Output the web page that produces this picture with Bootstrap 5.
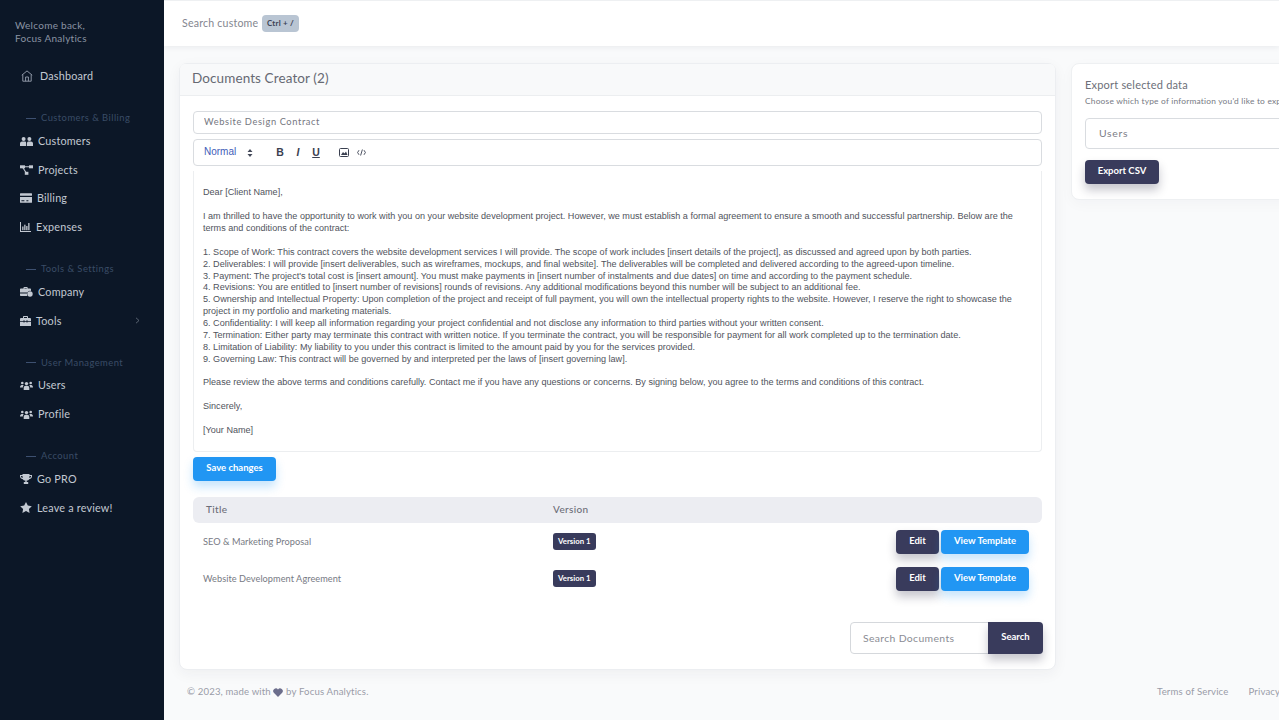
<!DOCTYPE html>
<html lang="en"><head><meta charset="utf-8"><title>Documents Creator</title>
<link href="https://cdn.jsdelivr.net/npm/bootstrap@5.3.0/dist/css/bootstrap.min.css" rel="stylesheet">
<style>
html,body{height:720px;overflow:hidden}
body{font-family:Lato,"Noto Sans",sans-serif;background:#f9fafb;color:#6c6f7d;font-size:11px;letter-spacing:.2px}
.shell{width:1279px;height:720px;overflow:hidden}
.side{width:164px;flex:none;background:#0c1727;height:720px;padding-top:19px}
.welcome{padding-left:15px;font-size:10px;line-height:13px;color:#8a93a3;margin-bottom:16.3px;letter-spacing:.27px}
.side .nav-link{display:flex;align-items:center;height:28.7px;padding:0 0 0 20px;color:#c3c9d2;font-size:10.8px;letter-spacing:.2px}
.side .nav-link svg{flex:none;margin-right:5px}
.side .nav-link.dash{padding-left:21px;margin-bottom:18.4px}
.side .nav-link.dash svg{margin-right:7px}
.sect{display:flex;align-items:center;height:20px;margin:0 0 -1.65px 26px;font-size:9.4px;letter-spacing:.45px;color:#3a4c66}
.sect::before{content:"";width:10px;height:1px;background:#3d5070;margin-right:5px}
.gapper{height:17.8px}
.side .nav-link .chev{margin-left:auto;margin-right:24px}
.mainwrap{min-width:0;flex:1;overflow:hidden}
.topbar{height:46px;background:#fff;border-top:1px solid #eef0f2;box-shadow:0 1px 6px rgba(30,40,60,.08);padding-left:18px}
.topbar input{width:76px;border:0;outline:0;background:none;padding:0;font-size:10.6px;letter-spacing:.2px;color:#70737f}
.topbar input::placeholder{color:#84868f}
.kbadge{background:#b9c5d3;color:#3b4254;font-size:8px;font-weight:700;padding:4px 5px;border-radius:4px;line-height:9px;letter-spacing:.2px}
.content{padding:17px 0 0 15px;gap:15px;width:1300px}
.maincard{width:877px;height:607px;flex:none;border:1px solid #eceef1;border-radius:8px;box-shadow:0 4px 14px rgba(30,40,60,.05);background:#fff}
.maincard .card-header{height:32px;padding:0 12px;background:#f8f9fa;border-bottom:1px solid #eceef0;font-size:13.5px;line-height:28px;letter-spacing:.1px;color:#666973}
.maincard .card-body{padding:15px 13px 0 13px}
.fld{height:23px;border:1px solid #d9dce0;border-radius:4px;padding:0 10px 2px;font-size:9.3px;letter-spacing:.6px;color:#75777f;box-shadow:none}
.tools{height:27px;border:1px solid #d9dce0;border-radius:4px;margin-top:5px;padding-left:10px;font-family:"Liberation Sans",sans-serif;color:#333a4c}
.tnorm{font-size:10px;color:#3f5cb8;width:43px;margin-top:-2px;letter-spacing:0}
.tbtn{width:18px;text-align:center;font-size:10.5px;color:#3a4050;font-weight:700;letter-spacing:0}
.tsort{margin-right:18px}
.timg{margin:0 8px 0 14px}
.editor{height:281px;margin-top:5px;border:1px solid #eceef0;border-top:0;border-radius:0 0 4px 4px;padding:16.4px 9px 0;font-family:"Liberation Sans",sans-serif;font-size:9.08px;line-height:11.87px;letter-spacing:0;color:#50535c}
.editor p{margin:0}
.btn-blue,.btn-navy{font-size:9.5px;letter-spacing:0;font-weight:700;color:#fff;border:0;border-radius:4px;padding:0 0 1px;height:24px}
.btn-blue{background:#2196f3;box-shadow:0 6px 10px rgba(33,150,243,.25)}
.btn-navy{background:#393b5c;box-shadow:0 6px 10px rgba(30,30,60,.25)}
.savebtn{width:83px;margin-top:5px}
.doc-table{margin:16px 0 0;--bs-table-bg:transparent;width:849px;table-layout:fixed}
.doc-table th{height:26px;padding:0 0 1px 13px;background:#ecedf2;border:0;font-weight:500;font-size:10px;letter-spacing:.35px;color:#6c6e78;vertical-align:middle}
.doc-table th:first-child{border-radius:6px 0 0 6px}.doc-table th:last-child{border-radius:0 6px 6px 0}
.doc-table th:nth-child(2){padding-left:0}
.doc-table td{height:37px;padding:0 0 0 10px;border:0;vertical-align:middle;font-size:9.2px;color:#777a84;letter-spacing:.05px}
.doc-table td:nth-child(2){padding-left:0}
.doc-table td:last-child{text-align:right;padding:0 13px 0 0;white-space:nowrap}
.vbadge{background:#393b5c;color:#fff;font-size:7.8px;font-weight:700;padding:4px 5px;line-height:9px;border-radius:3px;letter-spacing:0}
.tedit{width:43px;height:24px}.tview{width:88px;height:24px;margin-left:2px}
.searchgrp{width:193px;margin:25px -1px 0 auto}
.input-group.searchgrp>input.form-control{height:32px;width:139px;flex:none;border:1px solid #d5d8dc;border-radius:4px 0 0 4px;padding:0 12px;font-size:10.4px;letter-spacing:.35px}
.searchgrp input::placeholder{color:#8a8c94}
.input-group.searchgrp>.btn-navy{height:32px;width:55px;border-radius:0 4px 4px 0}
.sidecard{width:320px;height:137px;flex:none;border:1px solid #eef0f2;border-radius:8px;background:#fff;padding:14px 13px;overflow:hidden;box-shadow:0 4px 14px rgba(30,40,60,.03)}
.sidecard h6{font-size:11px;margin:0 0 3px;font-weight:400;letter-spacing:.2px;color:#6c6f79;line-height:14px}
.sidecard p{font-size:8.4px;margin:0 0 11px;letter-spacing:.2px;color:#777a84;line-height:12px;white-space:nowrap}
.sidecard .seldiv{height:31px;border:1px solid #d9dce0;border-radius:4px;padding:0 13px;font-size:10.4px;letter-spacing:.7px;line-height:29px;color:#7b7d86}
.csvbtn{width:74px;margin-top:11px}
.foot{padding:15px 0 0 23px;width:1300px;font-size:9.6px;letter-spacing:.15px;color:#9a9ca8}
.foot a{color:#9a9ca8;text-decoration:none}
.foot .links{margin-left:auto;width:307px;gap:20px}
</style></head><body>
<div class="shell d-flex">
<aside class="side">
 <div class="welcome">Welcome back,<br>Focus Analytics</div>
 <nav class="nav flex-column">
  <a class="nav-link dash" href="#"><svg width="12" height="12" viewBox="0 0 12 12" fill="none" stroke="#9aa3b1" stroke-width=".9"><path d="M.8 5.2 6 .9l5.2 4.3M1.800 4.600v6.600h8.400V4.600M4.600 11.200V7h2.800v4.200"/></svg>Dashboard</a>
  <div class="sect">Customers &amp; Billing</div>
  <a class="nav-link" href="#"><svg width="13" height="9" viewBox="0 0 13 9" fill="#c3c9d2"><circle cx="3.600" cy="2" r="2"/><circle cx="9.400" cy="2" r="2"/><path d="M0 9V6.600C0 5.300 1 4.600 2 4.600h3.200C6 4.600 6.200 5.300 6.200 6.600V9zM7 9V6.600c0-1.300.4-2 1.200-2H11c1 0 2 .7 2 2V9z"/></svg>Customers</a>
  <a class="nav-link" href="#"><svg width="13" height="10" viewBox="0 0 13 10" fill="#c3c9d2"><rect width="5" height="3" y=".3"/><rect x="9" width="4" height="3" y=".3"/><rect x="4.800" y="6.800" width="3.600" height="3"/><path d="M4 1.200h6v1H4zM2.500 3h1.200l2.600 4H5z"/></svg>Projects</a>
  <a class="nav-link" href="#"><svg width="12" height="10" viewBox="0 0 12 10" fill="#c3c9d2"><rect y=".3" width="12" height="2.400" rx=".5"/><path d="M0 4h12v5.200a.6.6 0 0 1-.6.6H.6a.6.6 0 0 1-.6-.6zm1.400 3.200v1h3v-1zm5 0v1h2v-1z" fill-rule="evenodd"/></svg>Billing</a>
  <a class="nav-link" href="#"><svg width="11" height="10" viewBox="0 0 11 10" fill="#c3c9d2"><path d="M0 0h1v9h10v1H0z"/><rect x="2.200" y="4.500" width="1.300" height="3.700"/><rect x="4.200" y="2.700" width="1.300" height="5.500"/><rect x="6.200" y="4" width="1.300" height="4.200"/><rect x="8.200" y="1" width="1.300" height="7.200"/></svg>Expenses</a>
  <div class="gapper"></div>
  <div class="sect">Tools &amp; Settings</div>
  <a class="nav-link" href="#"><svg width="13" height="10" viewBox="0 0 13 10" fill="#c3c9d2"><path d="M3.500 1.600V.8c0-.4.3-.8.8-.8h2.600c.5 0 .8.4.8.8v.8H10c.6 0 1 .4 1 1V4a3.200 3.200 0 0 0-3.700 1.600H0V2.600c0-.6.4-1 1-1zM4.500 1.600h2.200V1H4.500zM0 6.400h7V9H1c-.6 0-1-.4-1-1z"/><circle cx="10" cy="7" r="2.700"/></svg>Company</a>
  <a class="nav-link" href="#"><svg width="11" height="10" viewBox="0 0 11 10" fill="#c3c9d2"><path d="M3 2V1c0-.6.4-1 1-1h3c.6 0 1 .4 1 1v1h1.800c.7 0 1.200.5 1.200 1.200V5H7.500v-.7h-1V5h-2v-.7h-1V5H0V3.200C0 2.500.5 2 1.200 2zm1 0h3V1H4zM0 5.800h3.500v.7h1v-.7h2v.7h1v-.7H11V10H0z" fill-rule="evenodd"/></svg>Tools<svg class="chev" width="5" height="7" viewBox="0 0 5 7" fill="none" stroke="#6d7684" stroke-width=".8"><path d="m1 .8 3 2.700-3 2.700"/></svg></a>
  <div class="gapper"></div>
  <div class="sect">User Management</div>
  <a class="nav-link" href="#"><svg width="13" height="9" viewBox="0 0 13 9" fill="#c3c9d2"><circle cx="6.500" cy="2.600" r="1.700"/><circle cx="2.300" cy="2" r="1.300"/><circle cx="10.700" cy="2" r="1.300"/><path d="M3.700 9V7c0-1.300.9-2.200 2-2.200h1.600c1.100 0 2 .9 2 2.200v2zM0 6.500C0 5 .8 4 1.800 4h1.400l.4.600C3 5.200 2.800 5.800 2.800 6.500zM13 6.500C13 5 12.200 4 11.200 4H9.800l-.4.600c.6.600.8 1.200.8 1.900z"/></svg>Users</a>
  <a class="nav-link" href="#"><svg width="13" height="9" viewBox="0 0 13 9" fill="#c3c9d2"><circle cx="6.500" cy="2.600" r="1.700"/><circle cx="2.300" cy="2" r="1.300"/><circle cx="10.700" cy="2" r="1.300"/><path d="M3.700 9V7c0-1.300.9-2.200 2-2.200h1.600c1.100 0 2 .9 2 2.200v2zM0 6.500C0 5 .8 4 1.800 4h1.400l.4.600C3 5.200 2.800 5.800 2.800 6.500zM13 6.500C13 5 12.200 4 11.200 4H9.800l-.4.600c.6.600.8 1.200.8 1.900z"/></svg>Profile</a>
  <div class="gapper"></div>
  <div class="sect">Account</div>
  <a class="nav-link" href="#"><svg width="12" height="10" viewBox="0 0 12 10" fill="#c3c9d2"><path d="M2.500 0h7v1H12v1.300C12 3.800 10.900 5 9.200 5.200 8.700 6 8 6.400 6.700 6.600V8h1.500v2H3.800V8h1.500V6.600C4 6.400 3.300 6 2.800 5.200 1.100 5 0 3.800 0 2.300V1h2.500zM1 2v.3c0 .8.500 1.500 1.600 1.800L2.500 2zm10 0H9.500l-.1 2.100C10.500 3.800 11 3.100 11 2.300z" fill-rule="evenodd"/></svg>Go PRO</a>
  <a class="nav-link" href="#"><svg width="12" height="11" viewBox="0 0 12 11" fill="#c3c9d2"><path d="m6 0 1.800 3.600 4 .6L8.900 7l.7 4L6 9.100 2.400 11l.7-4L.2 4.200l4-.6z"/></svg>Leave a review!</a>
 </nav>
</aside>
<div class="mainwrap">
 <div class="topbar d-flex align-items-center gap-1">
  <input type="text" placeholder="Search customer" aria-label="Search"><span class="kbadge">Ctrl + /</span>
 </div>
 <div class="content d-flex align-items-start">
  <div class="card maincard">
   <div class="card-header">Documents Creator (2)</div>
   <div class="card-body">
    <input class="form-control fld" value="Website Design Contract" aria-label="Title">
    <div class="tools d-flex align-items-center">
     <span class="tnorm">Normal</span>
     <svg width="6" height="8" viewBox="0 0 6 8" fill="#444a5a" class="tsort"><path d="M3 0l2.500 3H.5zM3 8 .5 5h5z"/></svg>
     <span class="tbtn">B</span><span class="tbtn fst-italic">I</span><span class="tbtn text-decoration-underline">U</span>
     <svg width="10" height="9" viewBox="0 0 10 9" class="timg"><rect x=".5" y=".5" width="9" height="8" rx="1" fill="none" stroke="#3a4050"/><path d="M2 7l2-3 1.500 1.500L7 3.500 8.500 7z" fill="#3a4050"/></svg>
     <svg width="9" height="7" viewBox="0 0 9 7" fill="none" stroke="#3a4050" stroke-width=".9"><path d="M2 1.200 .6 3.500 2 5.800M7 1.200l1.400 2.300L7 5.800M5.400.5 3.600 6.500"/></svg>
    </div>
    <div class="editor">
<p>Dear [Client Name],</p><p>&nbsp;</p>
<p>I am thrilled to have the opportunity to work with you on your website development project. However, we must establish a formal agreement to ensure a smooth and successful partnership. Below are the terms and conditions of the contract:</p><p>&nbsp;</p>
<p>1. Scope of Work: This contract covers the website development services I will provide. The scope of work includes [insert details of the project], as discussed and agreed upon by both parties.</p>
<p>2. Deliverables: I will provide [insert deliverables, such as wireframes, mockups, and final website]. The deliverables will be completed and delivered according to the agreed-upon timeline.</p>
<p>3. Payment: The project's total cost is [insert amount]. You must make payments in [insert number of instalments and due dates] on time and according to the payment schedule.</p>
<p>4. Revisions: You are entitled to [insert number of revisions] rounds of revisions. Any additional modifications beyond this number will be subject to an additional fee.</p>
<p>5. Ownership and Intellectual Property: Upon completion of the project and receipt of full payment, you will own the intellectual property rights to the website. However, I reserve the right to showcase the project in my portfolio and marketing materials.</p>
<p>6. Confidentiality: I will keep all information regarding your project confidential and not disclose any information to third parties without your written consent.</p>
<p>7. Termination: Either party may terminate this contract with written notice. If you terminate the contract, you will be responsible for payment for all work completed up to the termination date.</p>
<p>8. Limitation of Liability: My liability to you under this contract is limited to the amount paid by you for the services provided.</p>
<p>9. Governing Law: This contract will be governed by and interpreted per the laws of [insert governing law].</p><p>&nbsp;</p>
<p>Please review the above terms and conditions carefully. Contact me if you have any questions or concerns. By signing below, you agree to the terms and conditions of this contract.</p><p>&nbsp;</p>
<p>Sincerely,</p><p>&nbsp;</p><p>[Your Name]</p>
    </div>
    <button class="btn btn-blue savebtn">Save changes</button>
    <table class="table doc-table">
     <thead><tr><th style="width:360px">Title</th><th style="width:250px">Version</th><th></th></tr></thead>
     <tbody>
      <tr><td>SEO &amp; Marketing Proposal</td><td><span class="vbadge d-inline-block">Version 1</span></td><td><button class="btn btn-navy tedit">Edit</button><button class="btn btn-blue tview">View Template</button></td></tr>
      <tr><td>Website Development Agreement</td><td><span class="vbadge d-inline-block">Version 1</span></td><td><button class="btn btn-navy tedit">Edit</button><button class="btn btn-blue tview">View Template</button></td></tr>
     </tbody>
    </table>
    <div class="input-group searchgrp"><input class="form-control" placeholder="Search Documents" aria-label="Search Documents"><button class="btn btn-navy">Search</button></div>
   </div>
  </div>
  <div class="sidecard">
   <h6>Export selected data</h6>
   <p>Choose which type of information you'd like to export.</p>
   <div class="seldiv">Users</div>
   <button class="btn btn-navy csvbtn">Export CSV</button>
  </div>
 </div>
 <footer class="foot d-flex">
  <span>© 2023, made with <svg width="10" height="9" viewBox="0 0 10 9" fill="#6c6e8c"><path d="M5 9 .8 4.800A2.600 2.600 0 0 1 5 1.500a2.600 2.600 0 0 1 4.200 3.300z"/></svg> by Focus Analytics.</span>
  <div class="d-flex links"><a href="#">Terms of Service</a><a href="#">Privacy Policy</a></div>
 </footer>
</div>
</div>
</body></html>
